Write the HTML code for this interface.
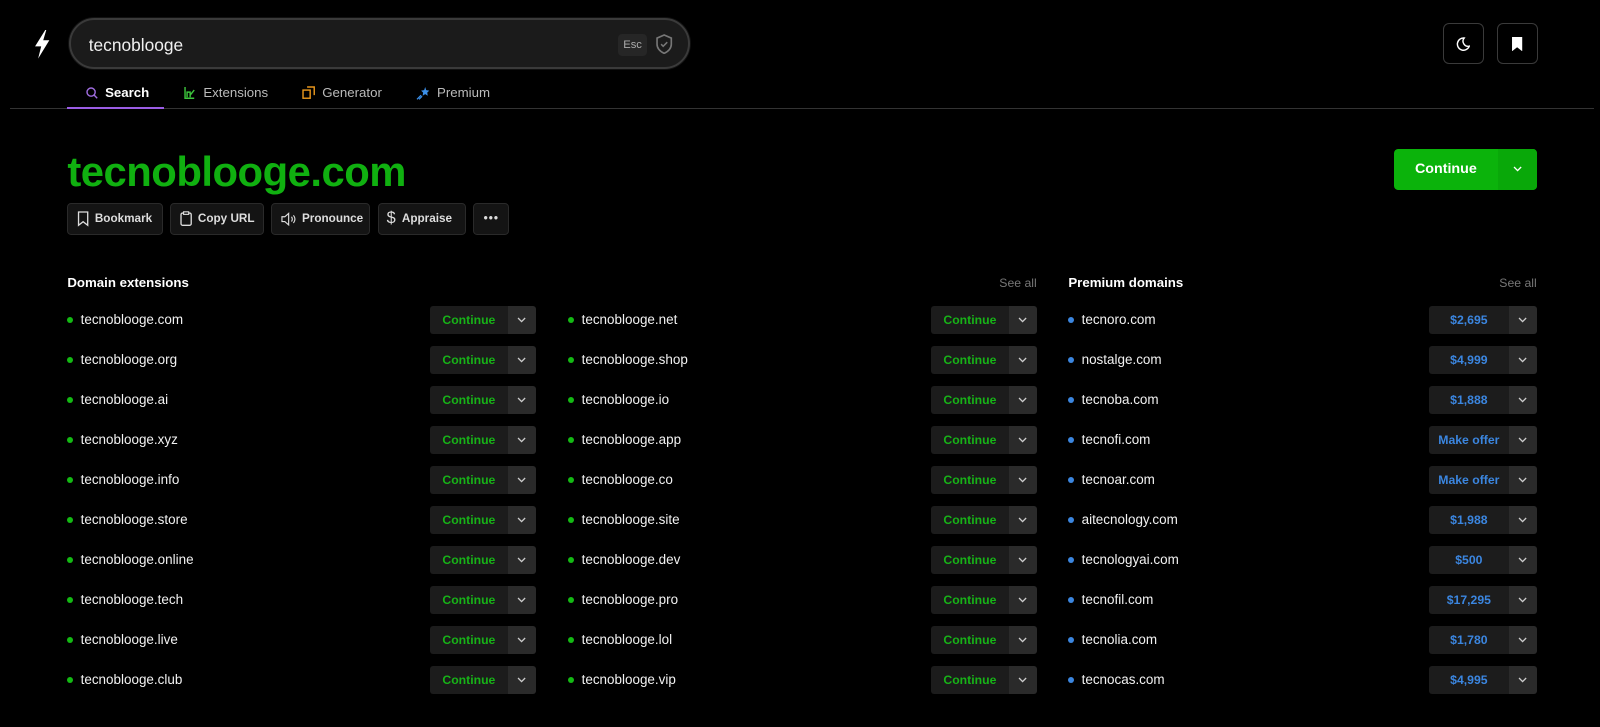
<!DOCTYPE html>
<html><head><meta charset="utf-8"><style>
*{box-sizing:border-box;margin:0;padding:0}
body{width:1600px;height:727px;background:#000;color:#fff;font-family:"Liberation Sans",sans-serif;overflow:hidden}
#w{position:relative;width:1568px;height:712px;zoom:1.0204}
svg{flex-shrink:0}
.abs{position:absolute}
.search{left:68px;top:18px;width:608px;height:50px;border-radius:25px;background:#1b1b1b;border:2px solid #3a3a3a;box-shadow:0 0 0 1px #111}
.search .t{position:absolute;left:17px;top:14px;font-size:17px;color:#f0f0f0}
.esc{position:absolute;left:536px;top:13px;width:28px;height:22px;border-radius:4px;background:#262626;color:#aaa;font-size:11px;text-align:center;line-height:22px}
.tabs{left:66px;top:79px;display:flex;font-size:13px;color:#bbb}
.tab{display:flex;align-items:center;gap:7px;height:24px;margin-right:33px}
.line{left:10px;top:106px;width:1552px;height:1px;background:#333}
.under{left:66px;top:105px;width:95px;height:2px;background:#9b5de5}
.ibtn{width:40px;height:40px;border:1px solid #3a3a3a;border-radius:6px;display:flex;align-items:center;justify-content:center}
h1{position:absolute;left:66px;top:145px;font-size:41px;font-weight:bold;color:#10b010;letter-spacing:-0.5px}
.acts{left:66px;top:199px;display:flex;gap:7px}
.act{height:31px;border:1px solid #2a2a2a;background:#141414;border-radius:4px;display:flex;align-items:center;gap:6px;padding:0 8px;font-size:11.5px;font-weight:bold;color:#ddd;white-space:nowrap;overflow:hidden}
.cont{left:1366px;top:146px;width:140px;height:40px;border-radius:4px;background:#0bb30b;display:flex}
.cont .a{width:102px;text-align:center;line-height:40px;font-weight:bold;font-size:14px}
.cont .b{flex:1;background:#09a809;border-radius:0 4px 4px 0;display:flex;align-items:center;justify-content:center}
.col{position:absolute;top:268px;width:459px}
.hd{display:flex;justify-content:space-between;font-size:13px;font-weight:bold;height:18px;align-items:center}
.hd span{font-weight:normal;color:#777;font-size:12px}
.row{display:flex;align-items:center;justify-content:space-between;height:39.2px}
.nm{display:flex;align-items:center;font-size:13.2px;color:#f2f2f2}
.dot{width:6px;height:6px;border-radius:50%;background:#13b913;margin-right:7px}
.bl .dot{background:#3b86e0}
.btn{display:flex;height:27px;border-radius:3px;overflow:hidden}
.btn .a{width:77px;background:#1c1c1c;color:#17b317;font-size:12px;font-weight:bold;text-align:center;line-height:28px}
.bl .btn .a{width:79px;color:#3b86e0}
.btn .b{width:27px;background:#2a2a2a;display:flex;align-items:center;justify-content:center}
</style></head><body><div id="w">
<svg class="abs" style="left:31px;top:28px" width="20" height="30" viewBox="0 0 20 30"><path d="M13 1 L3 17 H9 L6 29 L17 11 H11 L14 1Z" fill="#fff"/></svg>
<div class="abs search"><div class="t">tecnoblooge</div><div class="esc">Esc</div>
<svg style="position:absolute;left:572px;top:13px" width="18" height="20" viewBox="0 0 18 20"><path d="M9 1 L16 4 V10 C16 14 13 17 9 19 C5 17 2 14 2 10 V4Z" fill="none" stroke="#777" stroke-width="1.6"/><path d="M6 10 L8 12 L12 8" fill="none" stroke="#777" stroke-width="1.5"/></svg></div>
<div class="abs tabs">
<div class="tab" style="color:#fff;font-weight:bold;margin-left:18px"><svg width="12" height="12" viewBox="0 0 12 12"><circle cx="5" cy="5" r="4" fill="none" stroke="#a06de0" stroke-width="1.4"/><path d="M8 8L11 11" stroke="#a06de0" stroke-width="1.4"/></svg>Search</div>
<div class="tab"><svg width="13" height="14" viewBox="0 0 13 14"><path d="M2 1V12H11M4 11V6H7V11M7 9L11 4" fill="none" stroke="#3cc43c" stroke-width="1.4"/></svg>Extensions</div>
<div class="tab"><svg width="13" height="13" viewBox="0 0 13 13"><rect x="1" y="4" width="7" height="8" fill="none" stroke="#e8961c" stroke-width="1.4"/><path d="M5 1H12V9" fill="none" stroke="#e8961c" stroke-width="1.4"/></svg>Generator</div>
<div class="tab"><svg width="14" height="14" viewBox="0 0 14 14"><path d="M9 1L10 4L13 4.5L11 6.5L11.5 9.5L9 8L6.5 9.5L7 6.5L5 4.5L8 4Z" fill="#3b8fe8"/><path d="M1 13L5 9M3 13L6 10" stroke="#3b8fe8" stroke-width="1.2"/></svg>Premium</div>
</div>
<div class="abs line"></div><div class="abs under"></div>
<div class="abs ibtn" style="left:1414px;top:23px"><svg width="14" height="14" viewBox="0 0 14 14"><path d="M8 1A6 6 0 1 0 13 9A5 5 0 0 1 8 1Z" fill="none" stroke="#fff" stroke-width="1.4"/></svg></div>
<div class="abs ibtn" style="left:1467px;top:23px"><svg width="12" height="14" viewBox="0 0 12 14"><path d="M1 0H11V14L6 10L1 14Z" fill="#fff"/></svg></div>
<h1>tecnoblooge.com</h1>
<div class="abs acts">
<div class="act" style="width:94px"><svg width="12" height="15" viewBox="0 0 12 15"><path d="M1.5 1H10.5V14L6 10.5L1.5 14Z" fill="none" stroke="#ddd" stroke-width="1.3"/></svg>Bookmark</div>
<div class="act" style="width:92px"><svg width="12" height="15" viewBox="0 0 12 15"><rect x="1" y="2" width="10" height="12" rx="1.5" fill="none" stroke="#ddd" stroke-width="1.3"/><rect x="3.5" y="0.8" width="5" height="2.5" fill="#141414" stroke="#ddd" stroke-width="1.1"/></svg>Copy URL</div>
<div class="act" style="width:97px"><svg width="15" height="14" viewBox="0 0 16 14"><path d="M1 4.5H4L8 1V13L4 9.5H1Z" fill="none" stroke="#ddd" stroke-width="1.2"/><path d="M11 4.5C12 6 12 8 11 9.5M13 3C15 5.5 15 8.5 13 11" fill="none" stroke="#ddd" stroke-width="1.2"/></svg>Pronounce</div>
<div class="act" style="width:87px"><span style="font-size:16px;font-weight:normal">$</span>Appraise</div>
<div class="act" style="width:35px;justify-content:center;letter-spacing:1px">•••</div>
</div>
<div class="abs cont"><div class="a">Continue</div><div class="b"><svg width="9" height="6" viewBox="0 0 9 6"><path d="M1 1L4.5 4.5L8 1" fill="none" stroke="#fff" stroke-width="1.3"/></svg></div></div>

<div class="col" style="left:66px"><div class="hd">Domain extensions</div><div id="c1"></div></div>
<div class="col" style="left:557px"><div class="hd"><b></b><span>See all</span></div><div id="c2"></div></div>
<div class="col bl" style="left:1047px"><div class="hd">Premium domains<span>See all</span></div><div id="c3"></div></div>
</div>
<script>
var chev='<svg width="9" height="6" viewBox="0 0 9 6"><path d="M1 1L4.5 4.5L8 1" fill="none" stroke="#ccc" stroke-width="1.3"/></svg>';
function fill(id,names,labels){var h='';names.forEach(function(n,i){h+='<div class="row"'+(i==0?' style="margin-top:8px"':'')+'><div class="nm"><i class="dot"></i>'+n+'</div><div class="btn"><div class="a">'+(labels?labels[i]:'Continue')+'</div><div class="b">'+chev+'</div></div></div>'});document.getElementById(id).innerHTML=h;}
var t='tecnoblooge.';
fill('c1',['com','org','ai','xyz','info','store','online','tech','live','club'].map(function(x){return t+x}));
fill('c2',['net','shop','io','app','co','site','dev','pro','lol','vip'].map(function(x){return t+x}));
fill('c3',['tecnoro.com','nostalge.com','tecnoba.com','tecnofi.com','tecnoar.com','aitecnology.com','tecnologyai.com','tecnofil.com','tecnolia.com','tecnocas.com'],['$2,695','$4,999','$1,888','Make offer','Make offer','$1,988','$500','$17,295','$1,780','$4,995']);
</script>
</body></html>
